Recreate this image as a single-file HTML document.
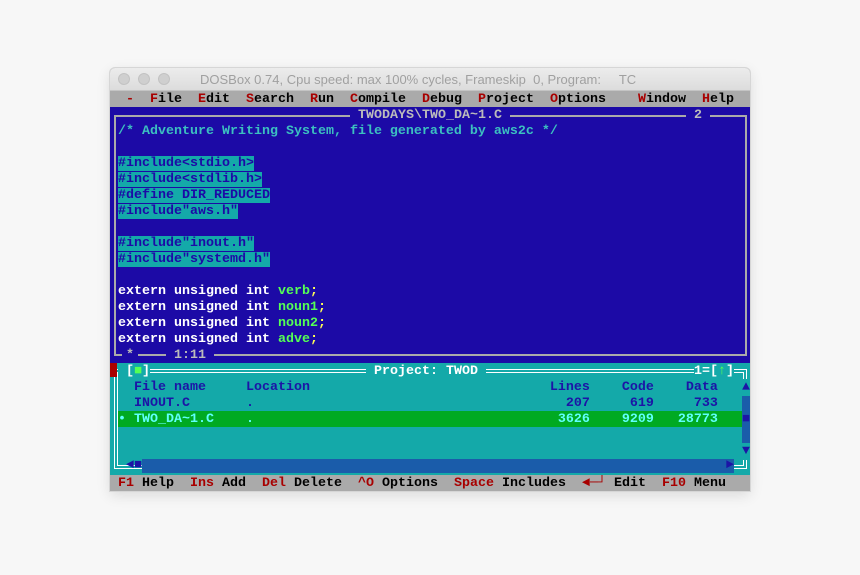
<!DOCTYPE html>
<html><head><meta charset="utf-8"><style>
*{margin:0;padding:0;box-sizing:border-box}
body{width:860px;height:575px;background:#f7f7f7;position:relative;overflow:hidden}
.win{position:absolute;left:110px;top:68px;width:640px;height:423px;background:#aaa;border-radius:5px 5px 0 0;box-shadow:0 0 0 1px #d6d6d6,0 4px 14px rgba(0,0,0,.12);overflow:hidden}
.tb{position:absolute;left:0;top:0;width:640px;height:23px;background:linear-gradient(#ececec,#dcdcdc);border-bottom:1px solid #c4c4c4}
.tb .d{position:absolute;top:5px;width:12px;height:12px;border-radius:50%;background:#cfcfcf;border:1px solid #c2c2c2}
.tb .t{position:absolute;left:90px;top:4px;font:13px "Liberation Sans",sans-serif;color:#a0a0a0;white-space:pre}
.r{position:absolute;left:110px;height:16px;width:640px;font:bold 13.333px/17px "Liberation Mono",monospace;white-space:pre}
.bl{background:#1c0aa6}.tl{background:#14a9a9}.gr{background:#aaa}
.k{color:#a80000}.w{color:#fff}.g{color:#55ff55}.y{color:#ffff55}.c{color:#3cc0c0}.lg{color:#bbb}.b{color:#1c14a6}.cy{color:#5ffffb}
.hl{background:#14a9a9;color:#1c0aa6}
.ab{position:absolute}
.pat{background:#1a5caa}
</style></head><body>
<div class="win">
<div class="tb"><div class="d" style="left:8px"></div><div class="d" style="left:28px"></div><div class="d" style="left:48px"></div><div class="t">DOSBox 0.74, Cpu speed: max 100% cycles, Frameskip  0, Program:     TC</div></div>
</div>
<div class="r gr" style="top:91px">  <span class="k">-</span>  <span class="k">F</span>ile  <span class="k">E</span>dit  <span class="k">S</span>earch  <span class="k">R</span>un  <span class="k">C</span>ompile  <span class="k">D</span>ebug  <span class="k">P</span>roject  <span class="k">O</span>ptions    <span class="k">W</span>indow  <span class="k">H</span>elp</div>
<div class="ab bl" style="left:110px;top:107px;width:640px;height:256px"></div>
<div class="ab" style="left:114px;top:115px;width:633px;height:241px;border:2px solid #aaa"></div>
<div class="r" style="top:107px"><span class="ab bl lg" style="left:240px;padding:0 8px">TWODAYS\TWO_DA~1.C</span><span class="ab bl lg" style="left:576px;padding:0 8px">2</span></div>
<div class="r c" style="top:123px"> /* Adventure Writing System, file generated by aws2c */</div>
<div class="r" style="top:155px"> <span class="hl">#include&lt;stdio.h&gt;</span></div>
<div class="r" style="top:171px"> <span class="hl">#include&lt;stdlib.h&gt;</span></div>
<div class="r" style="top:187px"> <span class="hl">#define DIR_REDUCED</span></div>
<div class="r" style="top:203px"> <span class="hl">#include"aws.h"</span></div>
<div class="r" style="top:235px"> <span class="hl">#include"inout.h"</span></div>
<div class="r" style="top:251px"> <span class="hl">#include"systemd.h"</span></div>
<div class="r w" style="top:283px"> extern unsigned int <span class="g">verb</span><span class="y">;</span></div>
<div class="r w" style="top:299px"> extern unsigned int <span class="g">noun1</span><span class="y">;</span></div>
<div class="r w" style="top:315px"> extern unsigned int <span class="g">noun2</span><span class="y">;</span></div>
<div class="r w" style="top:331px"> extern unsigned int <span class="g">adve</span><span class="y">;</span></div>
<div class="r" style="top:347px"><span class="ab bl lg" style="left:12px;padding:0 4px">*</span><span class="ab bl lg" style="left:56px;padding:0 8px">1:11</span></div>
<div class="ab tl" style="left:110px;top:363px;width:640px;height:112px"></div>
<div class="ab" style="left:114px;top:369px;width:633px;height:100px;border:1px solid #fff"></div>
<div class="ab" style="left:117px;top:372px;width:627px;height:94px;border:1px solid #fff"></div>
<div class="ab" style="left:110px;top:363px;width:7px;height:14px;background:#a80000"></div>
<div class="r" style="top:363px"><span class="ab tl w" style="left:8px"> [<span class="g">■</span>]</span><span class="ab tl w" style="left:256px;padding:0 8px">Project: TWOD</span><span class="ab tl w" style="left:584px">1=[<span class="g">↑</span>]</span></div>
<div class="r b" style="top:379px">   File name     Location                              Lines    Code    Data</div>
<div class="r b" style="top:395px">   INOUT.C       .                                       207     619     733</div>
<div class="ab" style="left:118px;top:411px;width:624px;height:16px;background:#00aa22"></div>
<div class="r cy" style="top:411px"> • TWO_DA~1.C    .                                      3626    9209   28773</div>
<div class="ab pat" style="left:742px;top:395px;width:8px;height:48px"></div>
<div class="r b" style="top:379px"><span class="ab tl" style="left:632px">▲</span></div>
<div class="r b" style="top:411px"><span class="ab" style="left:632px">■</span></div>
<div class="r b" style="top:443px"><span class="ab tl" style="left:632px">▼</span></div>
<div class="ab pat" style="left:142px;top:459px;width:592px;height:14px"></div>
<div class="r b" style="top:457px"><span class="ab" style="left:16px">◄■</span><span class="ab" style="left:616px">►</span></div>
<div class="r gr" style="top:475px"> <span class="k">F1</span> Help  <span class="k">Ins</span> Add  <span class="k">Del</span> Delete  <span class="k">^O</span> Options  <span class="k">Space</span> Includes  <span class="k">◄─┘</span> Edit  <span class="k">F10</span> Menu</div>
</body></html>
